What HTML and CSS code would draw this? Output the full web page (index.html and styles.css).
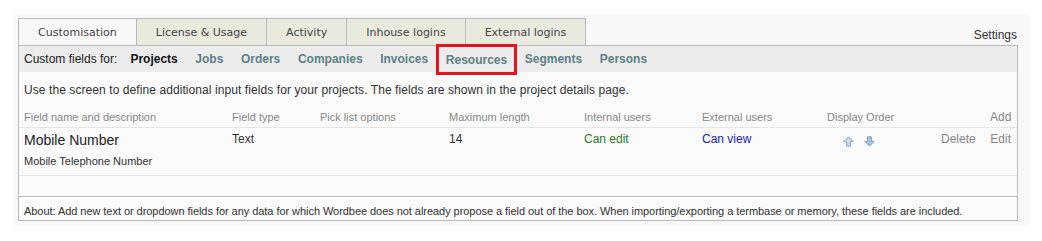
FILE: index.html
```html
<!DOCTYPE html>
<html lang="en">
<head>
    <meta charset="UTF-8">
    <title>Settings - Customisation</title>
    <link rel="stylesheet" href="styles.css">
</head>
<body>
    <div class="page">
        <div class="topbar">
            <div class="tabs">
                <div class="tab active">Customisation</div>
                <div class="tab">License &amp; Usage</div>
                <div class="tab">Activity</div>
                <div class="tab">Inhouse logins</div>
                <div class="tab">External logins</div>
            </div>
            <div class="settings">Settings</div>
        </div>

        <div class="box">
            <div class="subnav">
                <span class="label">Custom fields for:</span>
                <a class="current">Projects</a>
                <a>Jobs</a>
                <a>Orders</a>
                <a>Companies</a>
                <a>Invoices</a>
                <a class="marked">Resources</a>
                <a>Segments</a>
                <a>Persons</a>
            </div>

            <div class="content">
                <p class="intro">Use the screen to define additional input fields for your projects. The fields are shown in the project details page.</p>

                <div class="grid head">
                    <div>Field name and description</div>
                    <div>Field type</div>
                    <div>Pick list options</div>
                    <div>Maximum length</div>
                    <div>Internal users</div>
                    <div>External users</div>
                    <div>Display Order</div>
                    <div></div>
                    <div class="action add">Add</div>
                </div>

                <div class="grid row">
                    <div>
                        <div class="fname">Mobile Number</div>
                        <div class="fdesc">Mobile Telephone Number</div>
                    </div>
                    <div>Text</div>
                    <div></div>
                    <div>14</div>
                    <div class="can-edit">Can edit</div>
                    <div class="can-view">Can view</div>
                    <div class="order">
                        <svg width="11" height="11" viewBox="0 0 11 11"><path d="M5.5 0.8 L10.2 5.6 L7.4 5.6 L7.4 10.2 L3.6 10.2 L3.6 5.6 L0.8 5.6 Z" fill="#c9dcef" stroke="#86a5c6" stroke-width="1"/></svg>
                        <svg width="11" height="11" viewBox="0 0 11 11"><path d="M5.5 10.2 L10.2 5.4 L7.4 5.4 L7.4 0.8 L3.6 0.8 L3.6 5.4 L0.8 5.4 Z" fill="#a9c2de" stroke="#86a5c6" stroke-width="1"/></svg>
                    </div>
                    <div class="action delete">Delete</div>
                    <div class="action">Edit</div>
                </div>

                <div class="blank"></div>
            </div>

            <div class="about">About: Add new text or dropdown fields for any data for which Wordbee does not already propose a field out of the box. When importing/exporting a termbase or memory, these fields are included.</div>
        </div>
    </div>
</body>
</html>
```

FILE: styles.css
```css
body {
    margin: 0;
    background: #fff;
    font-family: "Liberation Sans", Arial, sans-serif;
    color: #333;
}
.page {
    margin: 14px 0 0 14px;
    width: 1016px;
    background: #f8f8f8;
    padding: 4px 12px 5px 4px;
    box-sizing: border-box;
}
.topbar {
    display: flex;
    justify-content: space-between;
    align-items: flex-end;
}
.tabs {
    display: flex;
}
.tab {
    height: 26px;
    line-height: 27px;
    padding: 0 19px;
    border: 1px solid #bbb;
    border-bottom: none;
    margin-right: -1px;
    background: #e9e9dd;
    font-family: "DejaVu Sans", Verdana, sans-serif;
    font-size: 11px;
    color: #444;
}
.tab.active {
    background: #f8f8f8;
}
.settings {
    font-size: 12px;
    color: #333;
    padding: 0 1px 3px 0;
}
.box {
    border: 1px solid #bbb;
    background: #fafafa;
}
.subnav {
    height: 26px;
    background: #ececec;
    display: flex;
    align-items: center;
    gap: 17.6px;
    padding-left: 5px;
    font-size: 12px;
}
.subnav .label {
    margin-right: -4.6px;
    color: #222;
}
.subnav a {
    font-weight: bold;
    color: #5f7f86;
}
.subnav a.current {
    color: #111;
}
.subnav a.marked {
    outline: 3px solid #e8121f;
    padding: 6px 7px 5px 7px;
    margin: 0 -7px;
}
.content {
    padding: 0 6px 0 5px;
}
.intro {
    margin: 0;
    padding: 11px 0 0 0;
    height: 24px;
    line-height: 14px;
    font-size: 12px;
    letter-spacing: 0.08px;
}
.grid {
    display: grid;
    grid-template-columns: 208px 88px 129px 135px 118px 125px 114px 49px 1fr;
}
.head {
    height: 20px;
    align-items: center;
    font-size: 11px;
    color: #888;
    border-bottom: 1px solid #e6e6e6;
    margin: 0 -6px 0 -5px;
    padding: 0 6px 0 5px;
}
.row {
    height: 48px;
    font-size: 12px;
    padding-top: 4px;
    box-sizing: border-box;
    border-bottom: 1px solid #e6e6e6;
    margin: 0 -6px 0 -5px;
    padding-left: 5px;
    padding-right: 6px;
}
.fname {
    font-size: 14px;
    color: #222;
}
.fdesc {
    font-size: 11px;
    margin-top: 7px;
}
.can-edit {
    color: #2c7a2c;
}
.can-view {
    color: #2323b8;
}
.order {
    display: flex;
    gap: 10px;
    padding: 4px 0 0 16px;
    align-items: flex-start;
}
.action {
    color: #888;
    text-align: right;
}
.action.delete {
    text-align: left;
}
.add {
    font-size: 12px;
}
.blank {
    height: 20px;
}
.about {
    border-top: 1px solid #bbb;
    height: 24px;
    box-sizing: border-box;
    padding: 8px 0 0 5px;
    line-height: 13px;
    font-size: 11px;
    letter-spacing: -0.05px;
    color: #333;
    background: #fafafa;
}
```
